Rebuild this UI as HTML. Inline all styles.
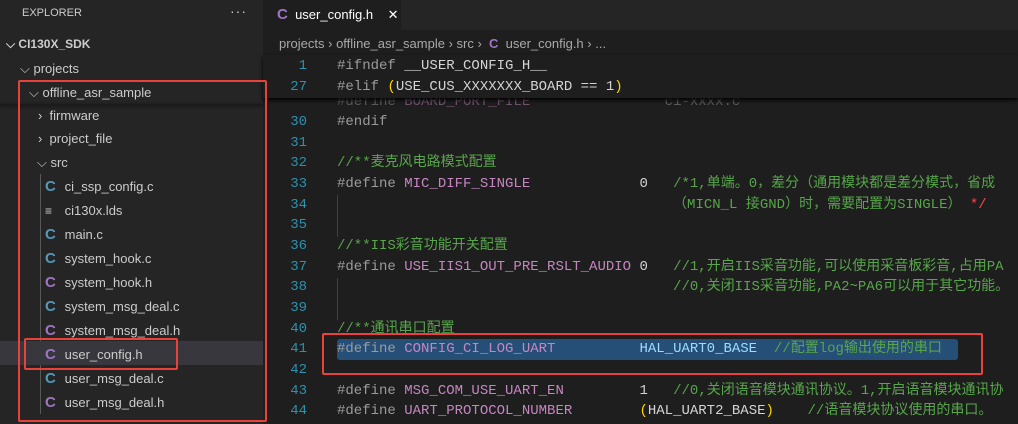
<!DOCTYPE html>
<html><head><meta charset="utf-8"><style>
*{margin:0;padding:0;box-sizing:border-box}
body{width:1018px;height:424px;overflow:hidden;background:#1e1e1e;font-family:"Liberation Sans","Noto Sans CJK SC",sans-serif;position:relative}
#side{position:absolute;left:0;top:0;width:263px;height:424px;background:#252526;color:#cccccc;font-size:13px}
.row{position:absolute;height:23px;line-height:23px;white-space:nowrap}
.ci{display:inline-block;width:16px;font-weight:bold;font-size:15px}
.cc{color:#519aba}.ch{color:#a074c4}
#ed{position:absolute;left:263px;top:0;right:0;bottom:0}
#tabs{position:absolute;left:0;top:0;right:0;height:30px;background:#252526}
#tab{position:absolute;left:0;top:0;width:138px;height:30px;background:#1e1e1e;color:#fff;font-size:13px;line-height:30px;padding-left:14px;white-space:nowrap}
#bc{position:absolute;left:16px;top:35px;color:#a9a9a9;font-size:13px;line-height:18px;white-space:nowrap}
.ln{position:absolute;left:0;width:44px;text-align:right;color:#2b91af;font-family:"Liberation Mono",monospace;font-size:14px;line-height:20px;height:20px}
.cd{position:absolute;left:74px;font-family:"Liberation Mono","Noto Sans CJK SC",monospace;font-size:14px;white-space:pre;color:#9b9b9b;line-height:20px;height:20px}
.m{color:#c586c0}.g{color:#57a64a}.w{color:#d4d4d4}.y{color:#ffd700}.b{color:#9cdcfe}
.gd{position:absolute;width:1px;background:#404040}
</style></head><body>
<div id="side">
<div class="row" style="left:22px;top:2px;font-size:11px">EXPLORER</div>
<div class="row" style="left:230px;top:0px;font-size:14px;letter-spacing:1px">···</div>
<div class="row" style="left:6px;top:33px;font-weight:bold;font-size:12px">⌵ CI130X_SDK</div>
<div class="row" style="left:20px;top:57px">⌵ projects</div>
<div class="row" style="left:29px;top:81px">⌵ offline_asr_sample</div>
<div style="position:absolute;left:0;top:104px;width:263px;height:1px;background:#1b1b1b;box-shadow:0 1px 3px #000"></div>
<div class="row" style="left:38px;top:104px">›&nbsp; firmware</div>
<div class="row" style="left:38px;top:127px">›&nbsp; project_file</div>
<div class="row" style="left:37px;top:151px">⌵ src</div>
<div style="position:absolute;left:40px;top:174px;width:1px;height:240px;background:#585858"></div>
<div style="position:absolute;left:0;top:341px;width:263px;height:24px;background:#37373d"></div>
<div class="row" style="left:45px;top:175px"><span class="ci cc">C</span> ci_ssp_config.c</div>
<div class="row" style="left:45px;top:199px"><span class="ci" style="font-size:12px">≡</span> ci130x.lds</div>
<div class="row" style="left:45px;top:223px"><span class="ci cc">C</span> main.c</div>
<div class="row" style="left:45px;top:247px"><span class="ci cc">C</span> system_hook.c</div>
<div class="row" style="left:45px;top:271px"><span class="ci ch">C</span> system_hook.h</div>
<div class="row" style="left:45px;top:295px"><span class="ci cc">C</span> system_msg_deal.c</div>
<div class="row" style="left:45px;top:319px"><span class="ci ch">C</span> system_msg_deal.h</div>
<div class="row" style="left:45px;top:343px"><span class="ci ch">C</span> user_config.h</div>
<div class="row" style="left:45px;top:367px"><span class="ci cc">C</span> user_msg_deal.c</div>
<div class="row" style="left:45px;top:391px"><span class="ci ch">C</span> user_msg_deal.h</div>
</div>
<div id="ed">
<div id="tabs"><div id="tab"><b style="color:#a074c4;font-size:15px">C</b>&nbsp; user_config.h&nbsp;&nbsp;&nbsp; ✕</div></div>
<div id="bc">projects › offline_asr_sample › src › &nbsp;<b style="color:#a074c4">C</b>&nbsp; user_config.h › ...</div>
<div class="gd" style="left:74px;top:195px;height:42px"></div>
<div class="gd" style="left:74px;top:278px;height:42px"></div>
<div style="position:absolute;left:74px;top:339px;width:621px;height:21px;background:#264f78;border-radius:3px"></div>
<div class="cd" style="top:92px;opacity:.5">#define <span class="m">BOARD_PORT_FILE</span>                <span>ci-xxxx.c</span></div>
<div style="position:absolute;left:0;top:55px;right:0;height:43px;background:#1e1e1e;box-shadow:0 2px 4px #000"></div>
<div class="ln" style="top:56px">1</div><div class="cd" style="top:56px">#ifndef <span class="w">__USER_CONFIG_H__</span></div>
<div class="ln" style="top:77px">27</div><div class="cd" style="top:77px">#elif <span class="y">(</span><span class="w">USE_CUS_XXXXXXX_BOARD == 1</span><span class="y">)</span></div>
<div class="ln" style="top:112px">30</div><div class="cd" style="top:112px">#endif</div>
<div class="ln" style="top:133px">31</div>
<div class="ln" style="top:153px">32</div><div class="cd g" style="top:153px">//**麦克风电路模式配置</div>
<div class="ln" style="top:174px">33</div><div class="cd" style="top:174px">#define <span class="m">MIC_DIFF_SINGLE</span>             <span class="w">0</span>   <span class="g">/*1,单端。0，差分（通用模块都是差分模式，省成</span></div>
<div class="ln" style="top:195px">34</div><div class="cd g" style="top:195px">                                        （MICN_L 接GND）时，需要配置为SINGLE） <span style="color:#f44">*/</span></div>
<div class="ln" style="top:215px">35</div>
<div class="ln" style="top:236px">36</div><div class="cd g" style="top:236px">//**IIS彩音功能开关配置</div>
<div class="ln" style="top:257px">37</div><div class="cd" style="top:257px">#define <span class="m">USE_IIS1_OUT_PRE_RSLT_AUDIO</span> <span class="w">0</span>   <span class="g">//1,开启IIS采音功能,可以使用采音板彩音,占用PA</span></div>
<div class="ln" style="top:277px">38</div><div class="cd g" style="top:277px">                                        //0,关闭IIS采音功能,PA2~PA6可以用于其它功能。</div>
<div class="ln" style="top:298px">39</div>
<div class="ln" style="top:319px">40</div><div class="cd g" style="top:319px">//**通讯串口配置</div>
<div class="ln" style="top:339px">41</div><div class="cd" style="top:339px">#define <span class="m">CONFIG_CI_LOG_UART</span>          <span class="b">HAL_UART0_BASE</span>  <span class="g">//配置log输出使用的串口</span></div>
<div class="ln" style="top:360px">42</div>
<div class="ln" style="top:381px">43</div><div class="cd" style="top:381px">#define <span class="m">MSG_COM_USE_UART_EN</span>         <span class="w">1</span>   <span class="g">//0,关闭语音模块通讯协议。1,开启语音模块通讯协</span></div>
<div class="ln" style="top:401px">44</div><div class="cd" style="top:401px">#define <span class="m">UART_PROTOCOL_NUMBER</span>        <span class="y">(</span><span class="w">HAL_UART2_BASE</span><span class="y">)</span>    <span class="g">//语音模块协议使用的串口。</span></div>
</div>
<div style="position:absolute;left:18px;top:80px;width:249px;height:342px;border:2px solid #e8423a;border-radius:2px"></div>
<div style="position:absolute;left:24px;top:338px;width:154px;height:32px;border:2px solid #e8423a;border-radius:2px"></div>
<div style="position:absolute;left:322px;top:333px;width:661px;height:42px;border:2px solid #e8423a;border-radius:2px"></div>
</body></html>
